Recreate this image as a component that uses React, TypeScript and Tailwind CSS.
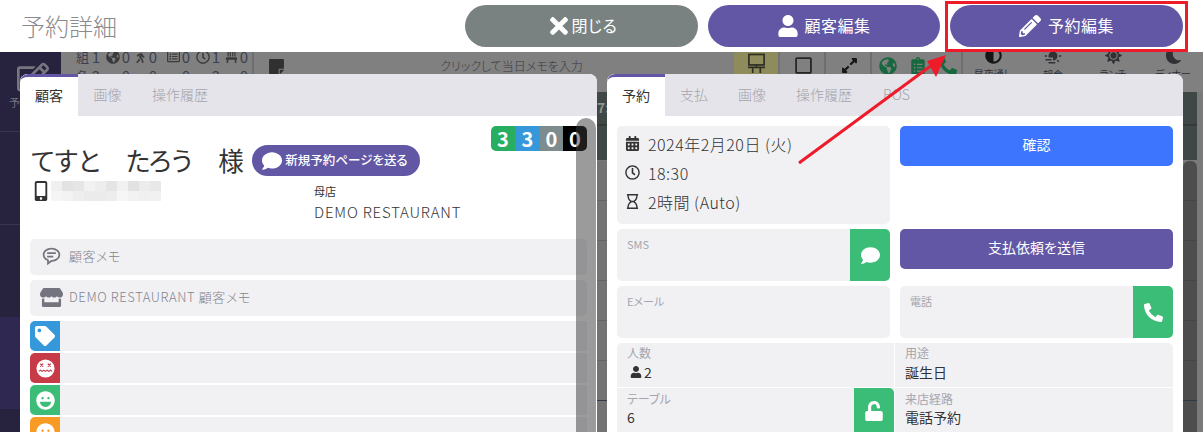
import React from "react";
import {
  FaTimes, FaUser, FaPencilAlt, FaCalendarAlt, FaRegClock, FaRegHourglass, FaMobileAlt, FaStore, FaTag,
  FaComment, FaPhoneAlt, FaUnlock, FaGlobeAmericas, FaClipboardList, FaExpandAlt, FaAdjust, FaSun, FaMoon,
  FaRegSquare, FaWalking, FaChair, FaRegEdit, FaStickyNote, FaLaugh, FaSmile, FaRegListAlt,
} from "react-icons/fa";
import { BiMessageRoundedDetail } from "react-icons/bi";
import { RiSunFoggyFill } from "react-icons/ri";

function Tab({ label, active, w }: { label: string; active?: boolean; w: string }) {
  return active ? (
    <div className={`${w} h-full bg-white border-t-[3px] border-[#6257a5] flex items-center justify-center text-[14px] text-[#333] pb-[3px] rounded-tl-[8px]`}>
      {label}
    </div>
  ) : (
    <div className={`${w} h-full flex items-center justify-center text-[14px] text-[#a5a5ad] font-light pb-[2px]`}>{label}</div>
  );
}

function HeaderBtn({ icon, label, color, width, gap }: { icon: React.ReactNode; label: string; color: string; width: string; gap: string }) {
  return (
    <div className={`${width} h-[42px] rounded-[21px] ${color} ${gap} flex items-center justify-center text-white text-[16px] tracking-[0.5px]`}>
      {icon}
      <span className="pb-[2px]">{label}</span>
    </div>
  );
}

function Dizzy() {
  return (
    <svg viewBox="0 0 20 20" className="w-[19px] h-[19px]">
      <circle cx="10" cy="10" r="9.5" fill="#fff" />
      <path d="M4.5 5l3 3m0-3l-3 3M12.5 5l3 3m0-3l-3 3" stroke="#c63b47" strokeWidth="1.3" />
      <path d="M3 13l1.7-1.2 1.7 1.2 1.8-1.2 1.8 1.2 1.8-1.2 1.8 1.2 1.7-1.2 1.7 1.2" stroke="#c63b47" strokeWidth="1.2" fill="none" />
    </svg>
  );
}

function Easel() {
  return (
    <svg viewBox="0 0 20 22" className="w-[19px] h-[21px] text-[#2f2f24]" fill="none" stroke="currentColor" strokeWidth="1.8">
      <rect x="2" y="1.5" width="16" height="11" />
      <path d="M1 15h18M6 15v6M14 15v6M10 12v4" />
    </svg>
  );
}

function TagRow({ color, icon }: { color: string; icon: React.ReactNode }) {
  return (
    <div className="h-[30px] bg-[#f1f1f4] rounded-l-[5px] flex shrink-0">
      <div className={`w-[30px] h-full ${color} rounded-l-[5px] flex items-center justify-center text-white`}>{icon}</div>
    </div>
  );
}

function Field({ label, h, green }: { label: string; h: string; green?: React.ReactNode }) {
  return (
    <div className={`${h} bg-[#f1f1f4] rounded-[5px] flex overflow-hidden`}>
      <div className="flex-1 pl-[10px] pt-[7px]">
        <div className="text-[11px] leading-[16px] text-[#a5a5ad]">{label}</div>
      </div>
      {green && <div className="w-[40px] bg-[#3cbd77] flex items-center justify-center text-white">{green}</div>}
    </div>
  );
}

function Stat({ icon, n, w }: { icon: React.ReactNode; n: string; w: string }) {
  return (
    <span className={`${w} flex items-center justify-end gap-[2px] shrink-0`}>
      {icon}
      <span>{n}</span>
    </span>
  );
}

function ToolIcon({ icon, label }: { icon: React.ReactNode; label: string }) {
  return (
    <div className="w-[60px] flex flex-col items-center text-[#303035] -mt-[5px]">
      {icon}
      <span className="text-[10px] leading-[12px] mt-[4px] whitespace-nowrap">{label}</span>
    </div>
  );
}

const mosaicTop = ["bg-[#f0f0f0]", "bg-[#e3e3e3]", "bg-[#e6e6e6]", "bg-[#f2f2f2]", "bg-[#ededed]", "bg-[#e4e4e4]", "bg-[#f1f1f1]", "bg-[#e2e2e2]", "bg-[#ececec]", "bg-[#e8e8e8]"];
const mosaicBottom = ["bg-[#f5f5f5]", "bg-[#f3f3f3]", "bg-[#eeeeee]", "bg-[#ebebeb]", "bg-[#ebebeb]", "bg-[#ededed]", "bg-[#f6f6f6]", "bg-[#f2f2f2]", "bg-[#f0f0f0]", "bg-[#f1f1f1]"];

export default function App() {
  return (
    <div className="relative w-[1203px] h-[432px] overflow-hidden bg-[#7a7a7a] font-['Noto_Sans_CJK_JP','Noto_Sans',sans-serif] [font-feature-settings:'palt']">
      {/* Top bar */}
      <header className="h-[52px] bg-white flex items-center pl-[21px] pr-[20px]">
        <h1 className="text-[24px] font-light text-[#8b8b8f] flex-1">予約詳細</h1>
        <div className="flex gap-[10px]">
          <HeaderBtn width="w-[233px]" gap="gap-0" color="bg-[#7a8281]" icon={<FaTimes className="text-[26px]" />} label="閉じる" />
          <HeaderBtn width="w-[232px]" gap="gap-[5px]" color="bg-[#6257a5]" icon={<FaUser className="text-[22px]" />} label="顧客編集" />
          <HeaderBtn width="w-[233px]" gap="gap-[6px]" color="bg-[#6257a5]" icon={<FaPencilAlt className="text-[22px] mr-[1px]" />} label="予約編集" />
        </div>
      </header>

      {/* Dimmed application behind the dialog */}
      <div className="flex h-[380px]">
        <aside className="w-[61px] bg-[#27233f] flex flex-col text-[#77757f]">
          <div className="h-[80px] border-b border-[#3a3650] pl-[17px] pt-[9px] shrink-0">
            <FaRegEdit className="text-[32px]" />
            <div className="text-[11px] -ml-[8px] mt-[1px]">予約</div>
          </div>
          <div className="h-[93px] border-b border-[#3a3650] shrink-0" />
          <div className="h-[92px] shrink-0" />
          <div className="h-[92px] bg-[#2f2850] shrink-0" />
        </aside>
        <main className="flex-1 flex flex-col">
          <div className="h-[40px] bg-[#808080] flex overflow-hidden shrink-0">
            <div className="w-[193px] border-r-2 border-[#6e6e6e] pl-[15px] text-[15px] leading-[15px] text-[#3b4050] shrink-0">
              <div className="flex items-center h-[15px] -mt-[3px]">
                <span className="w-[14px] shrink-0 text-[13px]">組</span>
                <Stat w="w-[10px]" icon={null} n="1" />
                <Stat w="w-[30px]" icon={<FaGlobeAmericas className="text-[#3a3a3a] text-[14px]" />} n="0" />
                <Stat w="w-[27px]" icon={<FaWalking className="text-[#3a3a3a] text-[13px]" />} n="0" />
                <Stat w="w-[33px]" icon={<FaRegListAlt className="text-[#3a3a3a] text-[13px]" />} n="0" />
                <Stat w="w-[30px]" icon={<FaRegClock className="text-[#3a3a3a] text-[14px]" />} n="1" />
                <Stat w="w-[28px]" icon={<FaChair className="text-[#3a3a3a] text-[13px]" />} n="0" />
              </div>
              <div className="flex items-center h-[15px] mt-[4px]">
                <span className="w-[14px] shrink-0 text-[13px]">名</span>
                <span className="w-[10px] text-right shrink-0">2</span>
                <span className="w-[30px] text-right shrink-0">0</span>
                <span className="w-[27px] text-right shrink-0">0</span>
                <span className="w-[33px] text-right shrink-0">0</span>
                <span className="w-[30px] text-right shrink-0">2</span>
                <span className="w-[28px] text-right shrink-0">0</span>
              </div>
            </div>
            <div className="w-[480px] flex shrink-0 pl-[11px]">
              <FaStickyNote className="text-[#303030] text-[17px] mt-[6px] ml-[3px]" />
              <div className="flex-1 text-center text-[12px] font-light text-[#3b3b40] pt-[5px] pl-[4px]">クリックして当日メモを入力</div>
            </div>
            <div className="w-[46px] bg-[#8e8c5c] flex justify-center pt-[1px] shrink-0 border-r-2 border-[#737373]">
              <Easel />
            </div>
            <div className="w-[46px] flex justify-center pt-[4px] shrink-0 border-r-2 border-[#6e6e6e] pl-[3px]">
              <FaRegSquare className="text-[19px] text-[#262626]" />
            </div>
            <div className="w-[46px] flex justify-center pt-[5px] shrink-0 border-r-2 border-[#6e6e6e] pl-[2px]">
              <FaExpandAlt className="text-[17px] text-[#161616]" />
            </div>
            <div className="w-[91px] flex items-start gap-[12px] pl-[7px] pt-[5px] shrink-0 border-r-2 border-[#6e6e6e] text-[#17683f]">
              <FaGlobeAmericas className="text-[18px] shrink-0" />
              <FaClipboardList className="text-[18px] shrink-0" />
              <FaPhoneAlt className="text-[18px] shrink-0" />
            </div>
            <div className="flex">
              <ToolIcon icon={<FaAdjust className="text-[17px] text-[#161616]" />} label="昼夜通し" />
              <ToolIcon icon={<RiSunFoggyFill className="text-[18px]" />} label="朝食" />
              <ToolIcon icon={<FaSun className="text-[17px]" />} label="ランチ" />
              <ToolIcon icon={<FaMoon className="text-[17px]" />} label="ディナー" />
            </div>
          </div>
          <div className="flex flex-1">
            <div className="w-[536px] shrink-0" />
            <div className="w-[10px] shrink-0">
              <div className="h-[68px] bg-[#3f4846] text-[14px] font-bold text-[#8d9492] leading-[30px] overflow-hidden">
                <div className="h-[34px] border-b-[2px] border-[#333a38]">7:</div>
              </div>
              <div className="h-[40px] mt-[1px] bg-[#737373] border-b border-[#646464]" />
              <div className="h-[40px] bg-[#737373] border-b border-[#646464]" />
              <div className="h-[40px] bg-[#737373] border-b border-[#646464]" />
              <div className="h-[40px] bg-[#737373] border-b border-[#646464]" />
              <div className="h-[40px] bg-[#737373] border-b border-[#646464]" />
              <div className="h-[40px] bg-[#737373] border-b border-[#2f3a44]" />
              <div className="h-[40px] bg-[#737373] border-b border-[#646464]" />
            </div>
            <div className="w-[576px] shrink-0" />
            <div className="w-[14px] shrink-0">
              <div className="h-[68px] bg-[#3f4846] mb-[1px]">
                <div className="h-[34px] border-b-[2px] border-[#333a38]" />
              </div>
              <div className="bg-[#4d4d4d] rounded-t-[6px] overflow-hidden">
                <div className="h-[40px] border-b border-[#454545]" />
                <div className="h-[40px] border-b border-[#454545]" />
                <div className="h-[40px] border-b border-[#454545]" />
                <div className="h-[40px] border-b border-[#454545]" />
                <div className="h-[40px] border-b border-[#454545]" />
                <div className="h-[40px] border-b border-[#2f3a44]" />
                <div className="h-[40px] border-b border-[#454545]" />
              </div>
            </div>
          </div>
        </main>
      </div>

      {/* Left dialog panel */}
      <section className="absolute left-[20px] top-[74px] w-[577px] h-[358px] bg-white rounded-t-[8px] overflow-hidden flex flex-col">
        <div className="h-[42px] bg-[#e4e4ea] flex shrink-0">
          <Tab w="w-[58px]" label="顧客" active />
          <Tab w="w-[59px]" label="画像" />
          <Tab w="w-[86px]" label="操作履歴" />
        </div>
        <div className="flex flex-col px-[10px] relative flex-1">
          <div className="absolute right-[10px] top-[10px] h-[25px] w-[96px] flex rounded-[5px] overflow-hidden text-white font-bold text-[20px] leading-[25px] text-center">
            <div className="w-[24px] bg-[#27ae60]">3</div>
            <div className="w-[25px] bg-[#3498db]">3</div>
            <div className="w-[23px] bg-[#7f8c8d]">0</div>
            <div className="w-[24px] bg-black">0</div>
          </div>
          <div className="h-[123px] shrink-0 relative">
            <div className="flex items-center pt-[29px] h-[60px]">
              <span className="text-[25.6px] font-normal text-[#333] whitespace-pre w-[222px] pl-[1px]">てすと　たろう　様</span>
              <span className="h-[31px] w-[168px] rounded-full bg-[#6257a5] text-white text-[12.5px] font-medium flex items-center justify-center gap-[3px] pr-[2px]">
                <FaComment className="text-[20px]" />
                新規予約ページを送る
              </span>
            </div>
            <div className="flex mt-[5px]">
              <FaMobileAlt className="text-[20px] text-[#333] ml-[4px] w-[14px] shrink-0" />
              <div className="ml-[3px] w-[110px] h-[20px] shrink-0 grid grid-cols-10 grid-rows-2">
                {mosaicTop.map((c, i) => (
                  <div key={i} className={c} />
                ))}
                {mosaicBottom.map((c, i) => (
                  <div key={i} className={c} />
                ))}
              </div>
              <div className="ml-[153px] mt-[3px] text-[#333]">
                <div className="text-[11px] leading-[14px]">母店</div>
                <div className="text-[15px] leading-[20px] mt-[4px] font-light whitespace-nowrap tracking-[0.8px]">DEMO RESTAURANT</div>
              </div>
            </div>
          </div>
          <div className="flex flex-col gap-[5px] shrink-0">
            <div className="h-[36px] bg-[#f1f1f4] rounded-[5px] flex items-center pl-[11px] text-[13px] tracking-[0.5px] font-light text-[#85858f] gap-[7px] pb-[3px]">
              <BiMessageRoundedDetail className="text-[21px] text-[#74747e] mt-[1px]" />
              顧客メモ
            </div>
            <div className="h-[36px] bg-[#f1f1f4] rounded-[5px] flex items-center pl-[10px] text-[13px] tracking-[0.6px] font-light text-[#85858f] gap-[6px] pb-[3px]">
              <FaStore className="text-[23px] text-[#74747e] mt-[1px]" />
              DEMO RESTAURANT 顧客メモ
            </div>
          </div>
          <div className="flex flex-col gap-[2px] mt-[5px]">
            <TagRow color="bg-[#3498db]" icon={<FaTag className="text-[20px]" />} />
            <TagRow color="bg-[#c63b47]" icon={<Dizzy />} />
            <TagRow color="bg-[#3cbd77]" icon={<FaLaugh className="text-[19px]" />} />
            <TagRow color="bg-[#f89b25]" icon={<FaSmile className="text-[19px]" />} />
          </div>
        </div>
        <div className="absolute right-[1px] top-[44px] bottom-0 w-[20px] rounded-t-[10px] bg-[rgba(55,55,55,0.5)]" />
      </section>

      {/* Right dialog panel */}
      <section className="absolute left-[607px] top-[74px] w-[576px] h-[358px] bg-white rounded-t-[8px] overflow-hidden flex flex-col">
        <div className="h-[42px] bg-[#e4e4ea] flex shrink-0">
          <Tab w="w-[58px]" label="予約" active />
          <Tab w="w-[58px]" label="支払" />
          <Tab w="w-[58px]" label="画像" />
          <Tab w="w-[86px]" label="操作履歴" />
          <Tab w="w-[59px]" label="POS" />
        </div>
        <div className="grid grid-cols-2 gap-x-[10px] gap-y-[5px] px-[10px] pt-[10px]">
          <div className="h-[98px] bg-[#f1f1f4] rounded-[5px] pl-[8px] pt-[4px] text-[16px] tracking-[0.5px] font-light text-[#333] flex flex-col">
            <div className="h-[29px] flex items-center gap-[8px] pb-[2px]">
              <FaCalendarAlt className="text-[15px]" />
              <span>2024年2月20日 (火)</span>
            </div>
            <div className="h-[29px] flex items-center gap-[8px] pb-[2px]">
              <FaRegClock className="text-[15px]" />
              <span>18:30</span>
            </div>
            <div className="h-[29px] flex items-center gap-[8px] pb-[2px]">
              <FaRegHourglass className="text-[15px]" />
              <span>2時間 (Auto)</span>
            </div>
          </div>
          <div className="h-[40px] bg-[#3e75fe] rounded-[5px] text-white text-[14px] flex items-center justify-center pb-[3px]">確認</div>
          <Field h="h-[52px]" label="SMS" green={<FaComment className="text-[19px]" />} />
          <div className="h-[40px] bg-[#6257a5] rounded-[5px] text-white text-[14px] flex items-center justify-center pb-[3px]">支払依頼を送信</div>
          <Field h="h-[52px]" label="Eメール" />
          <Field h="h-[52px]" label="電話" green={<FaPhoneAlt className="text-[19px]" />} />
        </div>
        <div className="grid grid-cols-[277px_1fr] gap-[1px] px-[10px] mt-[5px]">
          <div className="h-[44px] bg-[#f1f1f4] rounded-tl-[5px] pl-[10px] pt-[2px]">
            <div className="text-[12px] leading-[16px] text-[#a5a5ad]">人数</div>
            <div className="flex items-center text-[14px] leading-[20px] text-[#333] pl-[3px] mt-[1px]">
              <FaUser className="text-[12px]" />
              <span className="ml-[2px]">2</span>
            </div>
          </div>
          <div className="h-[44px] bg-[#f1f1f4] rounded-tr-[5px] pl-[10px] pt-[2px]">
            <div className="text-[12px] leading-[16px] text-[#a5a5ad]">用途</div>
            <div className="text-[14px] leading-[20px] text-[#333] mt-[1px]">誕生日</div>
          </div>
          <div className="h-[46px] bg-[#f1f1f4] pl-[10px] pt-[3px] flex">
            <div className="flex-1">
              <div className="text-[12px] leading-[16px] text-[#a5a5ad]">テーブル</div>
              <div className="text-[14px] leading-[20px] text-[#333]">6</div>
            </div>
            <div className="w-[40px] -mt-[3px] bg-[#3cbd77] rounded-tr-[5px] flex items-center justify-center text-white">
              <FaUnlock className="text-[20px]" />
            </div>
          </div>
          <div className="h-[46px] bg-[#f1f1f4] pl-[10px] pt-[3px]">
            <div className="text-[12px] leading-[16px] text-[#a5a5ad]">来店経路</div>
            <div className="text-[14px] leading-[20px] text-[#333]">電話予約</div>
          </div>
        </div>
      </section>

      {/* Red annotations */}
      <div className="absolute left-[945px] top-[1px] w-[243px] h-[51px] border-[3px] border-[#ee1c2b]" />
      <svg className="absolute left-[790px] top-[50px] w-[170px] h-[120px]" viewBox="0 0 170 120">
        <path d="M9 113L146 12" stroke="#ee1c2b" strokeWidth="3" fill="none" />
        <path d="M156 5L137 11L146 27Z" fill="#ee1c2b" />
      </svg>
    </div>
  );
}
